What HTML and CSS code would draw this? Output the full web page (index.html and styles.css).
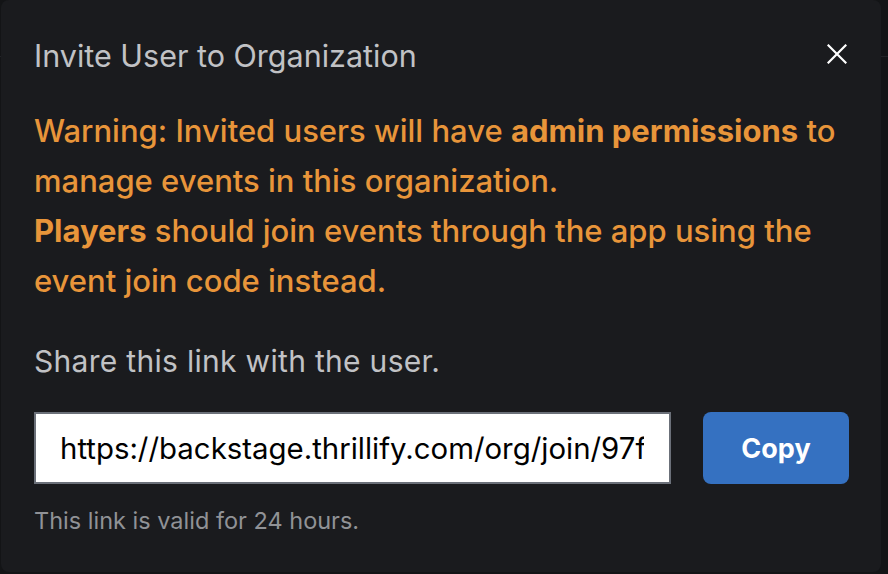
FILE: index.html
```html
<!DOCTYPE html>
<html lang="en">
<head>
<meta charset="utf-8">
<title>Invite User to Organization</title>
<link rel="stylesheet" href="styles.css">
</head>
<body>
<div class="backdrop">
  <div class="bg-rule"></div>
</div>
<section class="dialog" role="dialog" aria-labelledby="dlg-title">
  <header class="dialog-header">
    <h2 id="dlg-title" class="dialog-title">Invite User to Organization</h2>
    <button class="close-btn" aria-label="Close">
      <svg width="20" height="20" viewBox="0 0 20 20" fill="none" stroke="#ffffff" stroke-width="2.2" stroke-linecap="square">
        <path d="M1.5 1.5L18.5 18.5M18.5 1.5L1.5 18.5"/>
      </svg>
    </button>
  </header>
  <p class="warning">Warning: Invited users will have <strong>admin permissions</strong> to manage events in this organization.<br><strong>Players</strong> should join events through the app using the event join code instead.</p>
  <p class="share">Share this link with the user.</p>
  <div class="link-row">
    <div class="link-field">
      <div class="link-clip">
        <input class="link-input" type="text" readonly value="https://backstage.thrillify.com/org/join/97f3c2a1e8b04d6f" aria-label="Invite link">
      </div>
    </div>
    <button class="copy-btn">Copy</button>
  </div>
  <p class="hint">This link is valid for 24 hours.</p>
</section>
</body>
</html>
```

FILE: styles.css
```css
* { box-sizing: border-box; }
html, body {
  margin: 0;
  padding: 0;
  width: 888px;
  height: 574px;
  overflow: hidden;
  background: #131416;
  font-family: Inter, "Noto Sans", sans-serif;
}
body { position: relative; }
.backdrop {
  position: absolute;
  inset: 0;
  z-index: 0;
}
.bg-rule {
  position: absolute;
  left: 0;
  right: 0;
  top: 56px;
  height: 1px;
  background: #222327;
}
.dialog {
  position: relative;
  z-index: 1;
  margin-left: 1px;
  width: 880px;
  height: 572px;
  background: #1a1b1e;
  border-radius: 8px;
  padding: 35px 34px 0 33px;
}
.dialog-header {
  display: flex;
  align-items: center;
  justify-content: space-between;
  height: 40px;
}
.dialog-title {
  margin: 0;
  font-size: 30.5px;
  font-weight: 400;
  color: #c1c2c5;
}
.close-btn {
  background: none;
  border: 0;
  padding: 0;
  margin-top: -3px;
  width: 20px;
  height: 20px;
  display: flex;
  cursor: pointer;
}
.warning {
  margin: 31px -4px 0 0;
  font-size: 31px;
  line-height: 50px;
  font-weight: 500;
  color: #e8953a;
}
.warning strong { font-weight: 700; }
.share {
  margin: 35px 0 0 0;
  font-size: 30px;
  letter-spacing: 0.3px;
  line-height: 40px;
  color: #c1c2c5;
}
.link-row {
  display: flex;
  align-items: stretch;
  gap: 33px;
  margin-top: 31px;
}
.link-field {
  flex: 0 0 637px;
  width: 637px;
  height: 72px;
  border: 2px solid #6b7079;
  background: #ffffff;
  padding: 0 25px 0 24px;
}
.link-clip {
  width: 100%;
  height: 100%;
  overflow: hidden;
}
.link-input {
  display: block;
  width: 100%;
  min-width: 0;
  height: 100%;
  border: 0;
  padding: 0;
  margin: 0;
  background: transparent;
  color: #000000;
  font-family: Inter, "Noto Sans", sans-serif;
  font-size: 29.4px;
  outline: none;
}
.copy-btn {
  flex: 0 0 146px;
  width: 146px;
  height: 72px;
  margin-left: -1px;
  border: 0;
  border-radius: 8px;
  background: #3571c1;
  color: #ffffff;
  font-family: Inter, "Noto Sans", sans-serif;
  font-size: 27px;
  font-weight: 700;
  cursor: pointer;
}
.hint {
  margin: 22px 0 0 0;
  font-size: 23.5px;
  line-height: 30px;
  color: #909296;
}
```
